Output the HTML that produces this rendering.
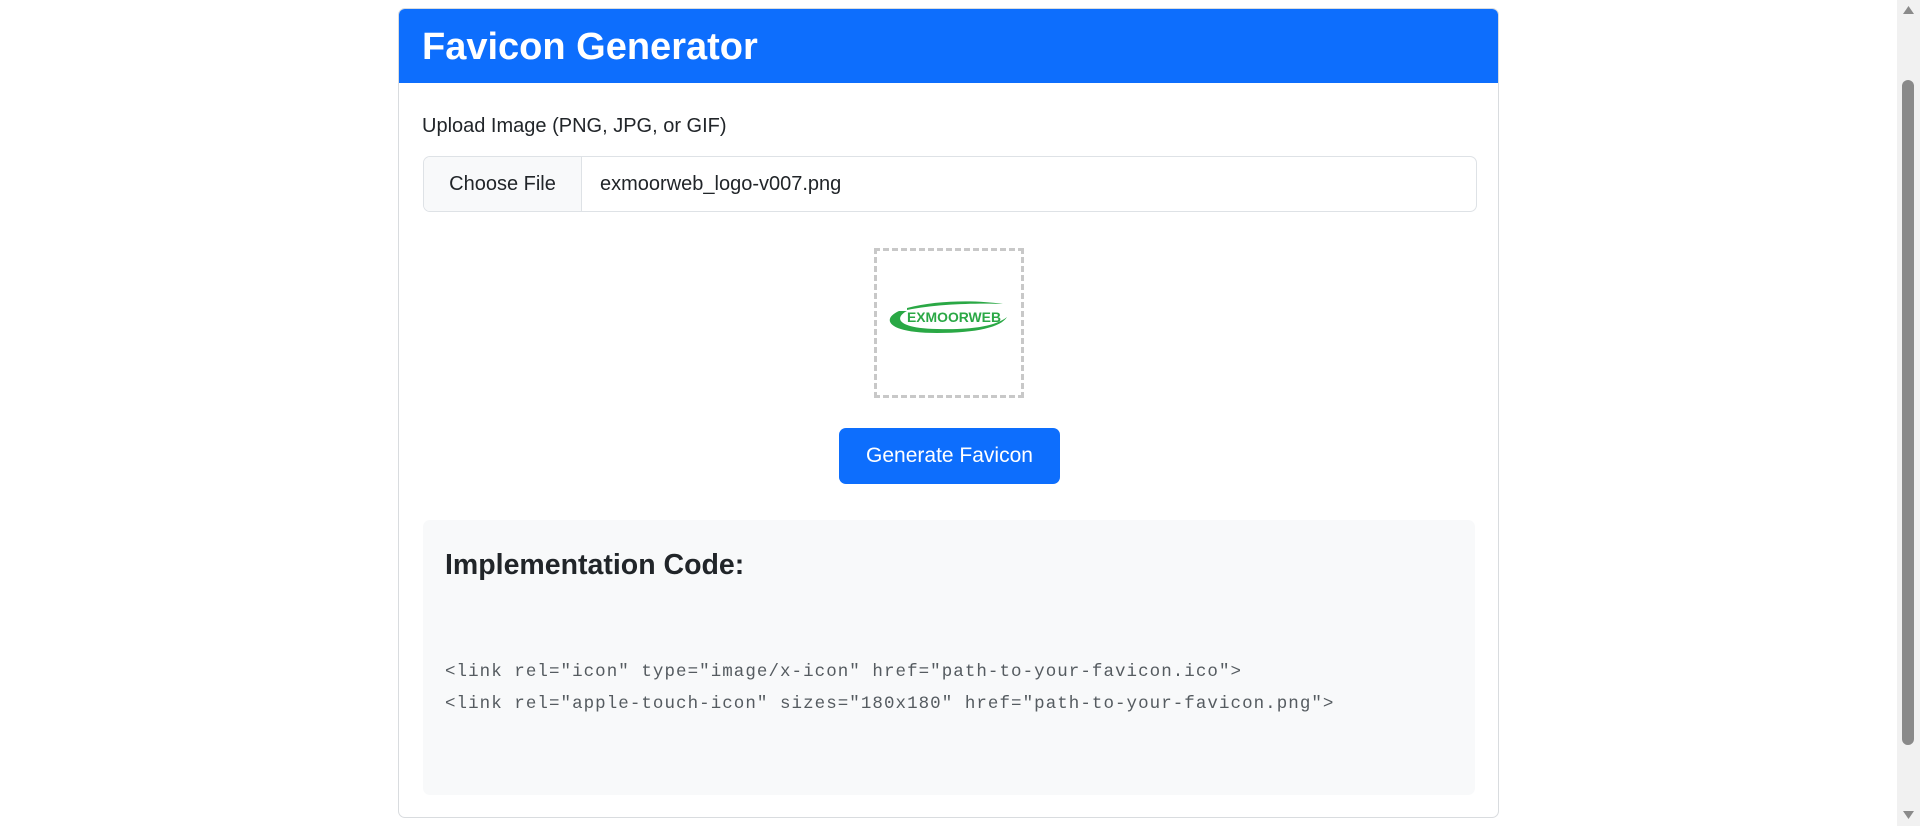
<!DOCTYPE html>
<html><head><meta charset="utf-8"><style>
*{box-sizing:border-box;margin:0;padding:0}
body{width:1920px;height:826px;background:#fff;font-family:"Liberation Sans",sans-serif;position:relative;overflow:hidden;color:#212529}
.card{position:absolute;left:398px;top:8px;width:1101px;height:810px;border:1px solid #d9dcdf;border-radius:7px;overflow:hidden}
.hdr{position:absolute;left:0;top:0;right:0;height:74px;background:#0d6efd;color:#fff;font-size:38px;font-weight:bold;padding-left:23px;line-height:76px}
.lbl{position:absolute;left:23px;top:106px;font-size:20px}
.inp{position:absolute;left:24px;top:147px;width:1054px;height:56px;border:1px solid #dee2e6;border-radius:7px;overflow:hidden;font-size:20px}
.cf{position:absolute;left:0;top:0;width:158px;height:100%;background:#f8f9fa;border-right:1px solid #dee2e6;line-height:54px;text-align:center}
.fn{position:absolute;left:176px;top:0;line-height:54px}
.prev{position:absolute;left:475px;top:239px;width:150px;height:150px;border:3px dashed #c8c8c8}
.btn{position:absolute;left:440px;top:419px;width:221px;height:56px;background:#0d6efd;color:#fff;border-radius:7px;font-size:21px;text-align:center;line-height:56px}
.code{position:absolute;left:24px;top:511px;width:1052px;height:275px;background:#f8f9fa;border-radius:7px}
.code h4{position:absolute;left:22px;top:29px;font-size:28.5px;font-weight:bold}
.code pre{position:absolute;left:22px;top:136px;font-family:"Liberation Mono",monospace;font-size:17.5px;letter-spacing:1.05px;line-height:32px;color:#555b60}
.sb{position:absolute;left:1897px;top:0;width:23px;height:826px;background:#f1f1f1}
.th{position:absolute;left:5px;top:80px;width:12px;height:665px;background:#8a8a8a;border-radius:6px}
</style></head><body>
<div class="card">
<div class="hdr">Favicon Generator</div>
<div class="lbl">Upload Image (PNG, JPG, or GIF)</div>
<div class="inp"><div class="cf">Choose File</div><div class="fn">exmoorweb_logo-v007.png</div></div>
<div class="prev"><svg width="144" height="144" viewBox="0 0 144 144">
<path d="M22 60 C 4 68, 10 82, 60 82 C 100 82, 124 76, 130 66 C 118 76, 90 79, 60 78 C 18 77, 18 66, 30 60 Z" fill="#2aa845"/>
<path d="M30 57 C 60 49, 100 49, 126 53 C 100 52, 60 53, 30 59 Z" fill="#2aa845"/>
<text x="30" y="71" textLength="94" lengthAdjust="spacingAndGlyphs" font-family="Liberation Sans,sans-serif" font-weight="bold" font-size="14" fill="#2aa845">EXMOORWEB</text>
</svg></div>
<div class="btn">Generate Favicon</div>
<div class="code"><h4>Implementation Code:</h4>
<pre>&lt;link rel="icon" type="image/x-icon" href="path-to-your-favicon.ico"&gt;
&lt;link rel="apple-touch-icon" sizes="180x180" href="path-to-your-favicon.png"&gt;</pre></div>
</div>
<div class="sb"><div class="th"></div>
<svg style="position:absolute;left:6px;top:6px" width="11" height="8"><path d="M0 8L5.5 0L11 8Z" fill="#8a8a8a"/></svg>
<svg style="position:absolute;left:6px;top:811px" width="11" height="8"><path d="M0 0L5.5 8L11 0Z" fill="#8a8a8a"/></svg>
</div>
</body></html>
